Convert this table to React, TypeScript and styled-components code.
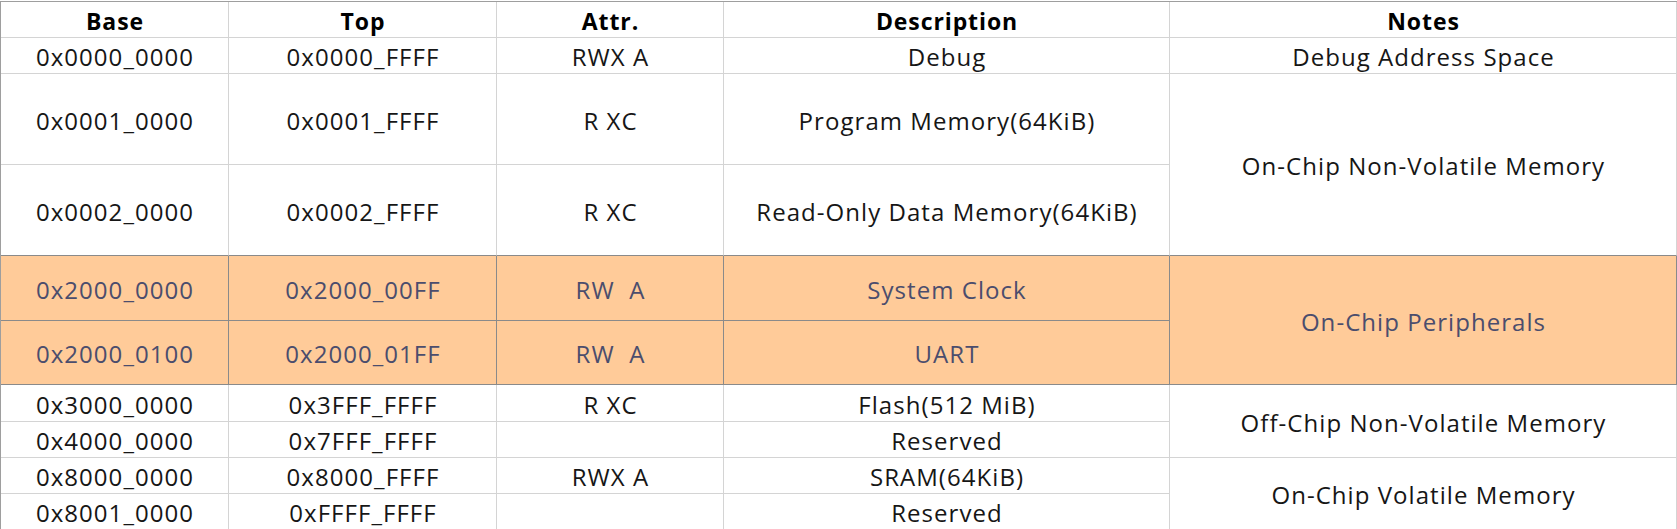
import styled, { createGlobalStyle } from "styled-components";

const GlobalStyle = createGlobalStyle`
  html, body {
    margin: 0;
    padding: 0;
    background: #ffffff;
  }
  body {
    font-family: "Open Sans", "Noto Sans CJK SC", sans-serif;
  }
`;

type Row = {
  base: string;
  top: string;
  attr: string;
  desc: string;
  height: number;
  peripheral?: boolean;
  beforePeripheral?: boolean;
};

// one entry per address range, in sheet order
const rows: Row[] = [
  { base: "0x0000_0000", top: "0x0000_FFFF", attr: "RWX A", desc: "Debug", height: 36 },
  { base: "0x0001_0000", top: "0x0001_FFFF", attr: "R XC", desc: "Program Memory(64KiB)", height: 91 },
  { base: "0x0002_0000", top: "0x0002_FFFF", attr: "R XC", desc: "Read-Only Data Memory(64KiB)", height: 91, beforePeripheral: true },
  { base: "0x2000_0000", top: "0x2000_00FF", attr: "RW  A", desc: "System Clock", height: 65, peripheral: true },
  { base: "0x2000_0100", top: "0x2000_01FF", attr: "RW  A", desc: "UART", height: 64, peripheral: true },
  { base: "0x3000_0000", top: "0x3FFF_FFFF", attr: "R XC", desc: "Flash(512 MiB)", height: 37 },
  { base: "0x4000_0000", top: "0x7FFF_FFFF", attr: "", desc: "Reserved", height: 36 },
  { base: "0x8000_0000", top: "0x8000_FFFF", attr: "RWX A", desc: "SRAM(64KiB)", height: 36 },
  { base: "0x8001_0000", top: "0xFFFF_FFFF", attr: "", desc: "Reserved", height: 36 },
];

// merged cells of the Notes column
const notes = [
  { text: "Debug Address Space", from: 2, span: 1 },
  { text: "On-Chip Non-Volatile Memory", from: 3, span: 2, beforePeripheral: true },
  { text: "On-Chip Peripherals", from: 5, span: 2, peripheral: true },
  { text: "Off-Chip Non-Volatile Memory", from: 7, span: 2 },
  { text: "On-Chip Volatile Memory", from: 9, span: 2 },
];

const headers = ["Base", "Top", "Attr.", "Description", "Notes"];

const App = () => {
  return (
    <>
      <GlobalStyle />
      <Sheet $rows={[36, ...rows.map((r) => r.height)]}>
        {headers.map((h, i) => (
          <HeadCell key={h} $row={1} $col={i + 1}>
            {h}
          </HeadCell>
        ))}
        {rows.map((r, i) =>
          [r.base, r.top, r.attr, r.desc].map((v, c) => (
            <Cell
              key={i + "-" + c}
              $row={i + 2}
              $col={c + 1}
              $peripheral={r.peripheral}
              $darkBottom={r.beforePeripheral}
            >
              {v}
            </Cell>
          ))
        )}
        {notes.map((n) => (
          <Cell
            key={n.text}
            $row={n.from}
            $span={n.span}
            $col={5}
            $peripheral={n.peripheral}
            $darkBottom={n.beforePeripheral}
          >
            {n.text}
          </Cell>
        ))}
      </Sheet>
    </>
  );
};

export default App;

const Sheet = styled.div<{ $rows: number[] }>`
  display: grid;
  grid-template-columns: 228px 268px 227px 446px 507px;
  grid-template-rows: ${(p) => p.$rows.map((h) => h + "px").join(" ")};
  margin-top: 1px;
  width: 1677px;
  box-sizing: border-box;
  border-top: 1px solid #9e9e9e;
  border-left: 1px solid #9e9e9e;
  background: #ffffff;
`;

const Cell = styled.div<{
  $row: number;
  $col: number;
  $span?: number;
  $peripheral?: boolean;
  $darkBottom?: boolean;
}>`
  grid-row: ${(p) => p.$row} / span ${(p) => p.$span ?? 1};
  grid-column: ${(p) => p.$col};
  display: flex;
  align-items: center;
  justify-content: center;
  box-sizing: border-box;
  padding: 2px 0 0 1px;
  border-right: 1px solid ${(p) => (p.$peripheral ? "#8a8a8a" : "#d4d4d4")};
  border-bottom: 1px solid
    ${(p) => (p.$peripheral || p.$darkBottom ? "#8a8a8a" : "#d4d4d4")};
  background: ${(p) => (p.$peripheral ? "#ffcb99" : "transparent")};
  color: ${(p) => (p.$peripheral ? "#4b4d6d" : "#161616")};
  font-size: 24px;
  letter-spacing: 1.05px;
  white-space: pre;
  overflow: hidden;
`;

const HeadCell = styled(Cell)`
  font-size: 23px;
  font-weight: 700;
  color: #000000;
  letter-spacing: 0.9px;
`;
